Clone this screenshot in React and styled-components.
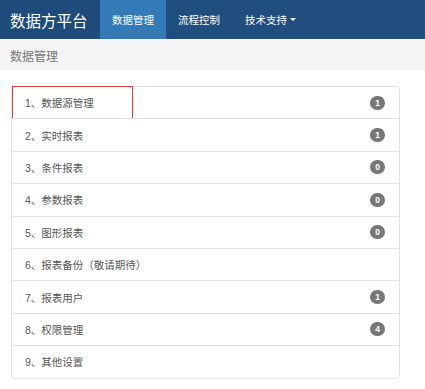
import React from "react";
import styled, { createGlobalStyle } from "styled-components";

const Global = createGlobalStyle`
  html, body { margin: 0; padding: 0; background: #fff; }
  body { font-family: "Liberation Sans", "Noto Sans CJK SC", sans-serif; }
`;

const Navbar = styled.nav`
  display: flex;
  height: 39px;
  background: #204e7e;
  border-bottom: 1px solid #fff;
`;

const Brand = styled.div`
  width: 100px;
  display: flex;
  align-items: center;
  padding-left: 10px;
  box-sizing: border-box;
  color: #fff;
  font-size: 15.5px;
  background: #1e4b7a;
`;

const NavItem = styled.div`
  display: flex;
  align-items: center;
  padding: 0 ${(p) => (p.$pad ? p.$pad : 12)}px;
  color: #fff;
  font-size: 10.5px;
  background: ${(p) => (p.$active ? "#337ab7" : "transparent")};
`;

const Caret = styled.span`
  display: inline-block;
  margin-left: 3px;
  width: 0;
  height: 0;
  border-left: 3px solid transparent;
  border-right: 3px solid transparent;
  border-top: 3.5px solid #fff;
`;

const Breadcrumb = styled.div`
  height: 30px;
  background: #f4f4f4;
  display: flex;
  align-items: center;
  padding-left: 10px;
  color: #777;
  font-size: 12px;
`;

const List = styled.ul`
  list-style: none;
  margin: 16px 0 0 11px;
  padding: 0;
  width: 389px;
`;

const Item = styled.li`
  position: relative;
  display: flex;
  align-items: center;
  justify-content: space-between;
  height: 33.4px;
  box-sizing: border-box;
  padding: 0 14px 0 13px;
  border: 1px solid #e3e3e3;
  margin-bottom: -1px;
  color: #555;
  font-size: 10.5px;
  background: #fff;
  &:first-child { border-radius: 4px 4px 0 0; }
  &:last-child { border-radius: 0 0 4px 4px; margin-bottom: 0; }
`;

const Focus = styled.span`
  position: absolute;
  left: 0;
  top: -1px;
  width: 121px;
  height: 34px;
  box-sizing: border-box;
  border: 1.5px solid #e5393a;
  pointer-events: none;
`;

const Badge = styled.span`
  display: inline-flex;
  align-items: center;
  justify-content: center;
  min-width: 15px;
  height: 14px;
  border-radius: 7px;
  background: #777;
  color: #fff;
  font-size: 8.5px;
  font-weight: bold;
`;

const items = [
  { t: "1、数据源管理", n: 1, focus: true },
  { t: "2、实时报表", n: 1 },
  { t: "3、条件报表", n: 0 },
  { t: "4、参数报表", n: 0 },
  { t: "5、图形报表", n: 0 },
  { t: "6、报表备份（敬请期待）" },
  { t: "7、报表用户", n: 1 },
  { t: "8、权限管理", n: 4 },
  { t: "9、其他设置" },
];

export default function App() {
  return (
    <>
      <Global />
      <Navbar>
        <Brand>数据方平台</Brand>
        <NavItem $active>数据管理</NavItem>
        <NavItem>流程控制</NavItem>
        <NavItem $pad={13}>
          技术支持
          <Caret />
        </NavItem>
      </Navbar>
      <Breadcrumb>数据管理</Breadcrumb>
      <List>
        {items.map((it) => (
          <Item key={it.t}>
            {it.focus && <Focus />}
            <span>{it.t}</span>
            {it.n !== undefined && <Badge>{it.n}</Badge>}
          </Item>
        ))}
      </List>
    </>
  );
}
